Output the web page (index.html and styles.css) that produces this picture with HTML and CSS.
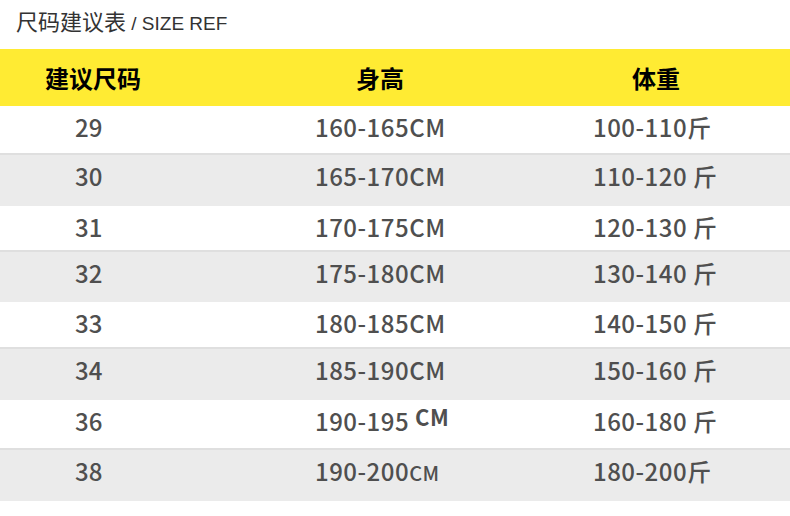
FILE: index.html
```html
<!DOCTYPE html>
<html lang="zh">
<head>
<meta charset="utf-8">
<title>尺码建议表</title>
<link rel="stylesheet" href="styles.css">
</head>
<body>
<div class="page">
  <h1 class="title"><span class="title-cn">尺码建议表</span><span class="title-en"> / SIZE REF</span></h1>
  <div class="table">
    <div class="row head">
      <div class="cell">建议尺码</div>
      <div class="cell">身高</div>
      <div class="cell">体重</div>
    </div>
    <div class="row">
      <div class="cell c1">29</div>
      <div class="cell c2">160-165CM</div>
      <div class="cell c3">100-110斤</div>
    </div>
    <div class="row">
      <div class="cell c1">30</div>
      <div class="cell c2">165-170CM</div>
      <div class="cell c3">110-120 斤</div>
    </div>
    <div class="row">
      <div class="cell c1">31</div>
      <div class="cell c2">170-175CM</div>
      <div class="cell c3">120-130 斤</div>
    </div>
    <div class="row">
      <div class="cell c1">32</div>
      <div class="cell c2">175-180CM</div>
      <div class="cell c3">130-140 斤</div>
    </div>
    <div class="row">
      <div class="cell c1">33</div>
      <div class="cell c2">180-185CM</div>
      <div class="cell c3">140-150 斤</div>
    </div>
    <div class="row">
      <div class="cell c1">34</div>
      <div class="cell c2">185-190CM</div>
      <div class="cell c3">150-160 斤</div>
    </div>
    <div class="row">
      <div class="cell c1">36</div>
      <div class="cell c2">190-195 <span class="cm-up">CM</span></div>
      <div class="cell c3">160-180 斤</div>
    </div>
    <div class="row">
      <div class="cell c1">38</div>
      <div class="cell c2">190-200<span class="cm-small">CM</span></div>
      <div class="cell c3">180-200斤</div>
    </div>
  </div>
</div>
</body>
</html>
```

FILE: styles.css
```css
html, body {
  margin: 0;
  padding: 0;
  background: #ffffff;
}

.page {
  width: 790px;
  height: 516px;
  overflow: hidden;
}

.title {
  margin: 0;
  height: 49px;
  padding: 5px 0 0 16px;
  box-sizing: border-box;
  font-weight: normal;
  color: #333333;
  line-height: 28px;
}

.title-cn {
  font-family: "Noto Sans CJK SC", sans-serif;
  font-size: 22px;
}

.title-en {
  font-family: "Liberation Sans", Arial, sans-serif;
  font-size: 19px;
}

.table {
  display: flex;
  flex-direction: column;
}

.row {
  display: grid;
  grid-template-columns: 186px 388px 164px 1fr;
  align-items: start;
  padding-top: 5px;
  box-sizing: border-box;
  font-family: "Noto Sans CJK SC", sans-serif;
  font-size: 24px;
  line-height: 32px;
  color: #4f4f4f;
  font-weight: 500;
}

.row:nth-child(odd):not(.head) {
  background: #ebebeb;
  border-top: 2px solid #dfdfdf;
  padding-top: 5px;
}

.row.head {
  background: #ffeb33;
  height: 57px;
  align-items: center;
  padding-top: 0;
  color: #000000;
  font-weight: bold;
  font-size: 24px;
}

.row.head .cell {
  text-align: center;
}

.row:nth-child(2) { height: 47px; }
.row:nth-child(3) { height: 53px; }
.row:nth-child(4) { height: 44px; }
.row:nth-child(5) { height: 52px; }
.row:nth-child(6) { height: 45px; }
.row:nth-child(7) { height: 53px; }
.row:nth-child(8) { height: 48px; }
.row:nth-child(9) { height: 53px; }

.c1 { padding-left: 75px; }
.c2 { padding-left: 129px; letter-spacing: 0.5px; }
.c3 { padding-left: 19px; letter-spacing: 0.5px; }

.cm-up {
  position: relative;
  top: -5px;
  font-weight: bold;
  font-size: 22px;
}

.cm-small {
  font-size: 20px;
}
```
